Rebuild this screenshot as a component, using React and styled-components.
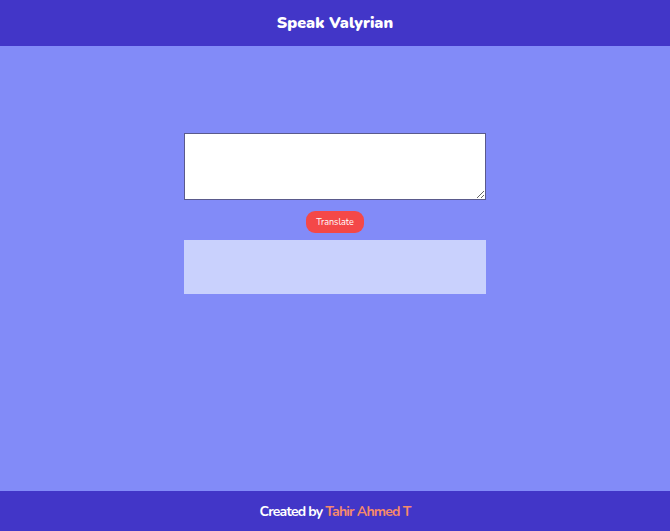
import React, { useState } from "react";
import styled, { createGlobalStyle } from "styled-components";

const GlobalStyle = createGlobalStyle`
  html, body {
    margin: 0;
    padding: 0;
    height: 100%;
  }
  body {
    font-family: 'Nunito', 'Lato', 'Open Sans', sans-serif;
    background-color: #828bf8;
  }
  #root {
    height: 100%;
  }
`;

const Page = styled.div`
  display: flex;
  flex-direction: column;
  min-height: 100vh;
  background-color: #828bf8;
`;

const Header = styled.header`
  height: 46px;
  background-color: #4236c8;
  display: flex;
  align-items: center;
  justify-content: center;
`;

const Title = styled.h1`
  margin: 0;
  font-size: 16px;
  font-weight: 900;
  color: #ffffff;
`;

const Main = styled.main`
  flex: 1;
  display: flex;
  flex-direction: column;
  align-items: center;
  padding-top: 87px;
`;

const Input = styled.textarea`
  box-sizing: border-box;
  width: 302px;
  height: 67px;
  margin: 0;
  border: 1px solid #5a5a8c;
  background: #ffffff;
  font-family: inherit;
  font-size: 13px;
  padding: 4px;
`;

const Button = styled.button`
  margin: 11px 0 7px;
  height: 22px;
  width: 58px;
  padding: 0;
  border: none;
  border-radius: 9px;
  background-color: #f44848;
  color: #ffffff;
  font-family: 'Nunito', 'Lato', sans-serif;
  font-size: 9px;
  cursor: pointer;
`;

const Output = styled.div`
  box-sizing: border-box;
  width: 302px;
  height: 54px;
  background-color: #c9d1fd;
`;

const Footer = styled.footer`
  height: 40px;
  background-color: #4236c8;
  display: flex;
  align-items: center;
  justify-content: center;
`;

const FooterText = styled.p`
  margin: 0;
  font-size: 14px;
  font-weight: 700;
  letter-spacing: -0.8px;
  color: #ffffff;
`;

const Author = styled.span`
  color: #f58a6a;
`;

export default function App() {
  const [text, setText] = useState("");
  const [result, setResult] = useState("");

  return (
    <>
      <GlobalStyle />
      <Page>
        <Header>
          <Title>Speak Valyrian</Title>
        </Header>
        <Main>
          <Input value={text} onChange={(e) => setText(e.target.value)} />
          <Button onClick={() => setResult(text)}>Translate</Button>
          <Output>{result}</Output>
        </Main>
        <Footer>
          <FooterText>
            Created by <Author>Tahir Ahmed T</Author>
          </FooterText>
        </Footer>
      </Page>
    </>
  );
}
